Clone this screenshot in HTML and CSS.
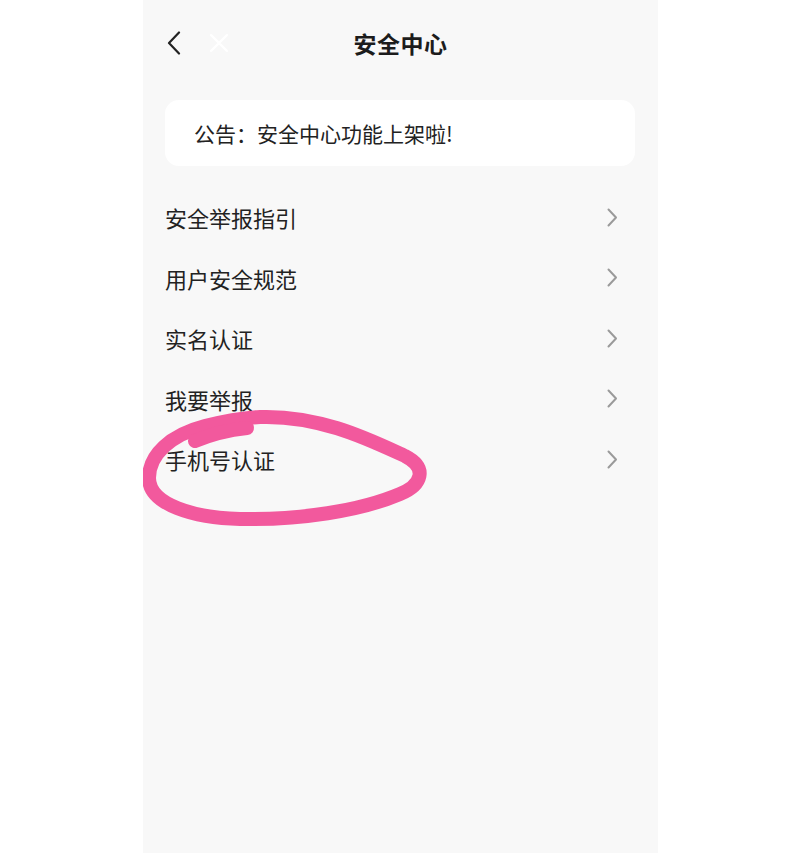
FILE: index.html
```html
<!DOCTYPE html>
<html lang="zh-CN">
<head>
<meta charset="utf-8">
<title>安全中心</title>
<link rel="stylesheet" href="styles.css">
</head>
<body>
<div class="phone">
  <header class="nav">
    <div class="nav-left">
      <svg class="icon-back" width="14" height="24" viewBox="0 0 14 24"><path d="M12 1.5 L2 12 L12 22.5" fill="none" stroke="#222" stroke-width="2.2" stroke-linecap="round" stroke-linejoin="round"/></svg>
      <svg class="icon-close" width="22" height="22" viewBox="0 0 22 22"><path d="M3 3 L19 19 M19 3 L3 19" fill="none" stroke="#ffffff" stroke-width="2.2" stroke-linecap="round"/></svg>
    </div>
    <h1 class="title">安全中心</h1>
    <div class="nav-right"></div>
  </header>

  <div class="notice">公告：安全中心功能上架啦!</div>

  <ul class="menu">
    <li class="row"><span>安全举报指引</span><svg class="chev" width="11" height="19" viewBox="0 0 11 19"><path d="M1.5 1.5 L9 9.5 L1.5 17.5" fill="none" stroke="#9a9a9a" stroke-width="2" stroke-linecap="round" stroke-linejoin="round"/></svg></li>
    <li class="row"><span>用户安全规范</span><svg class="chev" width="11" height="19" viewBox="0 0 11 19"><path d="M1.5 1.5 L9 9.5 L1.5 17.5" fill="none" stroke="#9a9a9a" stroke-width="2" stroke-linecap="round" stroke-linejoin="round"/></svg></li>
    <li class="row"><span>实名认证</span><svg class="chev" width="11" height="19" viewBox="0 0 11 19"><path d="M1.5 1.5 L9 9.5 L1.5 17.5" fill="none" stroke="#9a9a9a" stroke-width="2" stroke-linecap="round" stroke-linejoin="round"/></svg></li>
    <li class="row"><span>我要举报</span><svg class="chev" width="11" height="19" viewBox="0 0 11 19"><path d="M1.5 1.5 L9 9.5 L1.5 17.5" fill="none" stroke="#9a9a9a" stroke-width="2" stroke-linecap="round" stroke-linejoin="round"/></svg></li>
    <li class="row"><span>手机号认证</span><svg class="chev" width="11" height="19" viewBox="0 0 11 19"><path d="M1.5 1.5 L9 9.5 L1.5 17.5" fill="none" stroke="#9a9a9a" stroke-width="2" stroke-linecap="round" stroke-linejoin="round"/></svg></li>
  </ul>

  <svg class="scribble" width="515" height="853" viewBox="0 0 515 853">
    <path d="M6 478 C 6 455, 27 435, 62 426 C 82 421, 97 418, 117 417 C 177 415, 227 440, 262 456 C 285 468, 279 485, 257 494 C 217 511, 157 520, 97 519 C 52 518, 6 505, 6 478 Z" fill="none" stroke="#f2599d" stroke-width="14" stroke-linecap="round" stroke-linejoin="round"/>
    <path d="M52 441 Q 76 431 104 428" fill="none" stroke="#f2599d" stroke-width="14" stroke-linecap="round"/>
  </svg>
</div>
</body>
</html>
```

FILE: styles.css
```css
html, body {
  margin: 0;
  padding: 0;
  background: #ffffff;
}

body {
  font-family: "Noto Sans CJK SC", "Noto Sans", sans-serif;
  color: #222222;
}

.phone {
  position: relative;
  overflow: hidden;
  margin-left: 143px;
  width: 515px;
  height: 853px;
  background: #f8f8f8;
}

.nav {
  height: 86px;
  display: grid;
  grid-template-columns: 1fr auto 1fr;
  align-items: center;
}

.nav-left {
  display: flex;
  align-items: center;
  gap: 27px;
  padding-left: 24px;
}

.icon-back,
.icon-close {
  display: block;
}

.title {
  margin: 0;
  font-size: 23px;
  font-weight: 700;
  color: #1c1c1c;
  letter-spacing: 0.5px;
}

.notice {
  margin: 14px 23px 0 22px;
  height: 66px;
  box-sizing: border-box;
  padding: 0 29px;
  display: flex;
  align-items: center;
  background: #ffffff;
  border-radius: 14px;
  font-size: 21px;
  color: #222222;
}

.menu {
  list-style: none;
  margin: 21px 0 0 0;
  padding: 0;
}

.row {
  height: 60.5px;
  display: flex;
  align-items: center;
  justify-content: space-between;
  padding: 0 40px 0 22px;
  font-size: 22px;
  color: #222222;
}

.chev {
  display: block;
}

.scribble {
  position: absolute;
  left: 0;
  top: 0;
  pointer-events: none;
}
```
